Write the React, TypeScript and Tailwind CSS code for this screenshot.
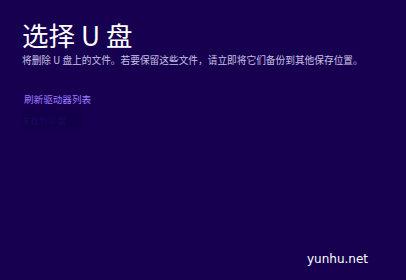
export default function App() {
  return (
    <div className="relative flex h-[280px] w-[406px] flex-col bg-[#16004f] px-[22px] pt-[18px] font-['Noto_Sans_CJK_SC','Noto_Sans',sans-serif]">
      <h1 className="text-[26.5px] leading-[34px] font-normal text-white">选择 U 盘</h1>
      <p className="mt-[2px] text-[9.7px] leading-[12px] text-[#c9c2e6]">
        将删除 U 盘上的文件。若要保留这些文件，请立即将它们备份到其他保存位置。
      </p>
      <a className="mt-[27px] pl-[2px] text-[9.6px] leading-[12px] text-[#9b7cff]">刷新驱动器列表</a>
      <div className="mt-[5px] h-[20px] w-[60px] bg-[#12004a] text-[8.5px] leading-[20px] text-[#1c0a5a]">
        未找到 U 盘
      </div>
      <span className="absolute left-[307px] top-[250px] font-['DejaVu_Sans',sans-serif] text-[12px] text-white">
        yunhu.net
      </span>
    </div>
  );
}
